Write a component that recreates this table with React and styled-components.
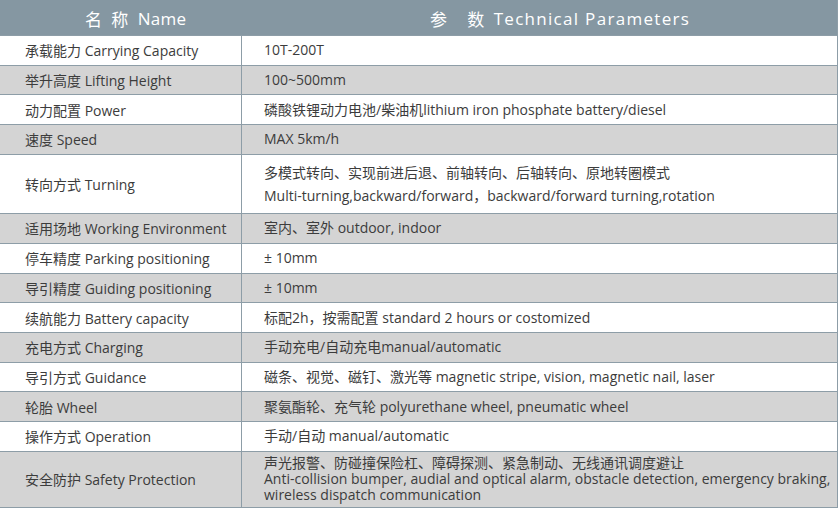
import React from 'react'
import styled, { createGlobalStyle } from 'styled-components'

const GlobalStyle = createGlobalStyle`
  html, body {
    margin: 0;
    padding: 0;
    background: #ffffff;
  }
  body {
    font-family: "Open Sans", "Noto Sans CJK SC", sans-serif;
    color: #3c3c3c;
  }
`

const Sheet = styled.div`
  width: 838px;
  border-right: 1px solid #8d9da7;
  box-sizing: border-box;
  display: flex;
  flex-direction: column;
`

const HeadRow = styled.div`
  display: grid;
  grid-template-columns: 242px 1fr;
  height: 36px;
  background: #8597a2;
  color: #ffffff;
  font-size: 17px;
  border-bottom: 1px solid #8d9da7;
  box-sizing: border-box;
`

const HeadCell = styled.div`
  display: flex;
  align-items: center;
  padding-left: ${p => p.$indent}px;
  padding-top: 2px;
  letter-spacing: ${p => p.$track}px;
  white-space: pre;
`

const Gap = styled.span`
  display: inline-block;
  width: ${p => p.$w}px;
`

const Row = styled.div`
  display: grid;
  grid-template-columns: 242px 1fr;
  height: ${p => p.$h}px;
  background: ${p => (p.$shade ? '#d4d4d4' : '#ffffff')};
  border-bottom: 1px solid #8d9da7;
  box-sizing: border-box;
  font-size: 14px;
`

const NameCell = styled.div`
  display: flex;
  align-items: center;
  padding-left: 25px;
  border-right: 1px solid #8d9da7;
  white-space: nowrap;
`

const ValueCell = styled.div`
  display: flex;
  flex-direction: column;
  justify-content: center;
  padding-left: 22px;
  white-space: nowrap;
  overflow: visible;
  line-height: ${p => p.$lh || 20}px;
`

const rows = [
  ['承载能力 Carrying Capacity', ['10T-200T']],
  ['举升高度 Lifting Height', ['100~500mm']],
  ['动力配置 Power', ['磷酸铁锂动力电池/柴油机lithium iron phosphate battery/diesel']],
  ['速度 Speed', ['MAX 5km/h']],
  ['转向方式 Turning', ['多模式转向、实现前进后退、前轴转向、后轴转向、原地转圈模式', 'Multi-turning,backward/forward，backward/forward turning,rotation'], 59.4, 23],
  ['适用场地 Working Environment', ['室内、室外 outdoor, indoor']],
  ['停车精度 Parking positioning', ['± 10mm']],
  ['导引精度 Guiding positioning', ['± 10mm']],
  ['续航能力 Battery capacity', ['标配2h，按需配置 standard 2 hours or costomized']],
  ['充电方式 Charging', ['手动充电/自动充电manual/automatic']],
  ['导引方式 Guidance', ['磁条、视觉、磁钉、激光等 magnetic stripe, vision, magnetic nail, laser']],
  ['轮胎 Wheel', ['聚氨酯轮、充气轮 polyurethane wheel, pneumatic wheel']],
  ['操作方式 Operation', ['手动/自动 manual/automatic']],
  ['安全防护 Safety Protection', ['声光报警、防碰撞保险杠、障碍探测、紧急制动、无线通讯调度避让', 'Anti-collision bumper, audial and optical alarm, obstacle detection, emergency braking,', 'wireless dispatch communication'], 56, 16],
]

export default function App() {
  return (
    <>
      <GlobalStyle />
      <Sheet>
        <HeadRow>
          <HeadCell $indent={85} $track={0.3}>名<Gap $w={9} />称<Gap $w={9} />Name</HeadCell>
          <HeadCell $indent={188} $track={1.3}>参<Gap $w={19} />数<Gap $w={8} />Technical Parameters</HeadCell>
        </HeadRow>
        {rows.map(([name, lines, h, lh], i) => (
          <Row key={name} $h={h || 29.7} $shade={i % 2 === 1}>
            <NameCell>{name}</NameCell>
            <ValueCell $lh={lh}>
              {lines.map(l => (
                <span key={l}>{l}</span>
              ))}
            </ValueCell>
          </Row>
        ))}
      </Sheet>
    </>
  )
}
